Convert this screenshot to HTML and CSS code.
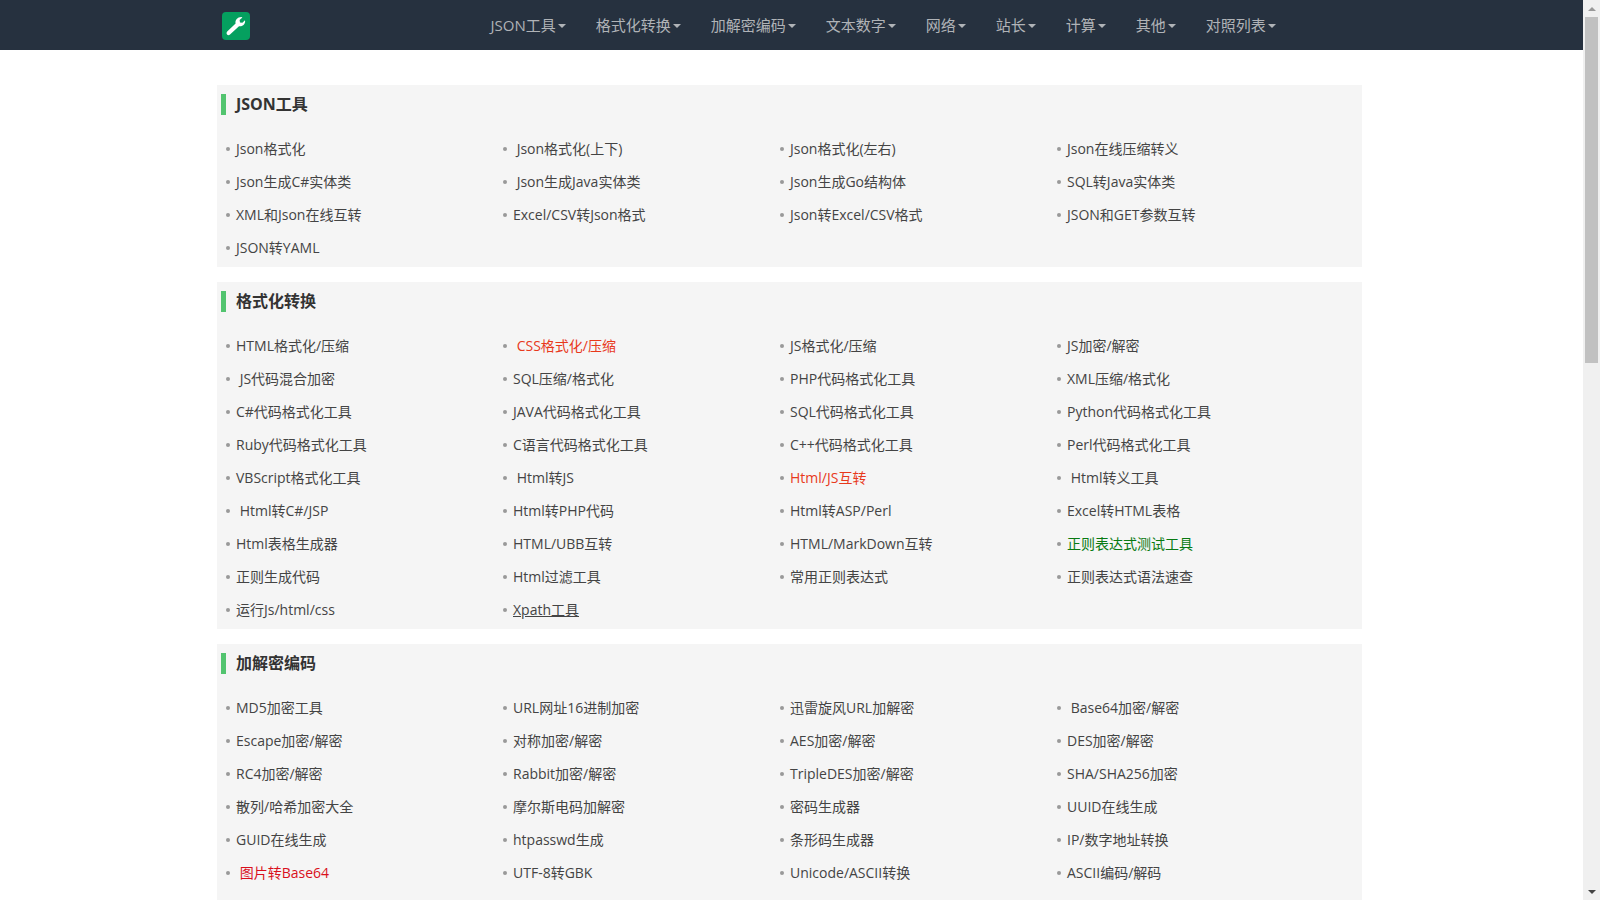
FILE: index.html
```html
<!DOCTYPE html>
<html lang="zh-CN">
<head>
  <meta charset="UTF-8" />
  <title>在线工具</title>
  <meta name="viewport" content="width=device-width, initial-scale=1" />
  <link rel="stylesheet" href="styles.css">
</head>
<body>
  <div class="page">
    <header class="navbar">
      <div class="container">
        <a class="brand" href="#" aria-label="首页">
          <svg width="28" height="28" viewBox="0 0 28 28" aria-hidden="true">
            <rect width="28" height="28" rx="4" fill="#05a05f"/>
            <path d="M5.200 19.600L13.600 11.600C12.900 8 15.400 5 19.400 5L20.400 5.400L17.600 8L18 10.400L20.400 10.800L23 8.200C23.800 11.800 20.800 14.800 17 14.200L8 22.600Q6.500 23.800 5 22.600Q3.800 21 5.200 19.600Z" fill="#fff"/>
          </svg>
        </a>
        <nav>
          <ul class="menu">
            <li><a href="#">JSON工具<span class="caret"></span></a></li>
            <li><a href="#">格式化转换<span class="caret"></span></a></li>
            <li><a href="#">加解密编码<span class="caret"></span></a></li>
            <li><a href="#">文本数字<span class="caret"></span></a></li>
            <li><a href="#">网络<span class="caret"></span></a></li>
            <li><a href="#">站长<span class="caret"></span></a></li>
            <li><a href="#">计算<span class="caret"></span></a></li>
            <li><a href="#">其他<span class="caret"></span></a></li>
            <li><a href="#">对照列表<span class="caret"></span></a></li>
          </ul>
        </nav>
      </div>
    </header>

    <main class="content">
      <section class="panel">
        <h2>JSON工具</h2>
        <ul class="tools">
          <li><a href="#">Json格式化</a></li>
          <li>&nbsp;<a href="#">Json格式化(上下)</a></li>
          <li><a href="#">Json格式化(左右)</a></li>
          <li><a href="#">Json在线压缩转义</a></li>
          <li><a href="#">Json生成C#实体类</a></li>
          <li>&nbsp;<a href="#">Json生成Java实体类</a></li>
          <li><a href="#">Json生成Go结构体</a></li>
          <li><a href="#">SQL转Java实体类</a></li>
          <li><a href="#">XML和Json在线互转</a></li>
          <li><a href="#">Excel/CSV转Json格式</a></li>
          <li><a href="#">Json转Excel/CSV格式</a></li>
          <li><a href="#">JSON和GET参数互转</a></li>
          <li><a href="#">JSON转YAML</a></li>
        </ul>
      </section>

      <section class="panel">
        <h2>格式化转换</h2>
        <ul class="tools">
          <li><a href="#">HTML格式化/压缩</a></li>
          <li>&nbsp;<a class="hot" href="#">CSS格式化/压缩</a></li>
          <li><a href="#">JS格式化/压缩</a></li>
          <li><a href="#">JS加密/解密</a></li>
          <li>&nbsp;<a href="#">JS代码混合加密</a></li>
          <li><a href="#">SQL压缩/格式化</a></li>
          <li><a href="#">PHP代码格式化工具</a></li>
          <li><a href="#">XML压缩/格式化</a></li>
          <li><a href="#">C#代码格式化工具</a></li>
          <li><a href="#">JAVA代码格式化工具</a></li>
          <li><a href="#">SQL代码格式化工具</a></li>
          <li><a href="#">Python代码格式化工具</a></li>
          <li><a href="#">Ruby代码格式化工具</a></li>
          <li><a href="#">C语言代码格式化工具</a></li>
          <li><a href="#">C++代码格式化工具</a></li>
          <li><a href="#">Perl代码格式化工具</a></li>
          <li><a href="#">VBScript格式化工具</a></li>
          <li>&nbsp;<a href="#">Html转JS</a></li>
          <li><a class="hot" href="#">Html/JS互转</a></li>
          <li>&nbsp;<a href="#">Html转义工具</a></li>
          <li>&nbsp;<a href="#">Html转C#/JSP</a></li>
          <li><a href="#">Html转PHP代码</a></li>
          <li><a href="#">Html转ASP/Perl</a></li>
          <li><a href="#">Excel转HTML表格</a></li>
          <li><a href="#">Html表格生成器</a></li>
          <li><a href="#">HTML/UBB互转</a></li>
          <li><a href="#">HTML/MarkDown互转</a></li>
          <li><a class="green" href="#">正则表达式测试工具</a></li>
          <li><a href="#">正则生成代码</a></li>
          <li><a href="#">Html过滤工具</a></li>
          <li><a href="#">常用正则表达式</a></li>
          <li><a href="#">正则表达式语法速查</a></li>
          <li><a href="#">运行Js/html/css</a></li>
          <li><a class="active" href="#">Xpath工具</a></li>
        </ul>
      </section>

      <section class="panel">
        <h2>加解密编码</h2>
        <ul class="tools">
          <li><a href="#">MD5加密工具</a></li>
          <li><a href="#">URL网址16进制加密</a></li>
          <li><a href="#">迅雷旋风URL加解密</a></li>
          <li>&nbsp;<a href="#">Base64加密/解密</a></li>
          <li><a href="#">Escape加密/解密</a></li>
          <li><a href="#">对称加密/解密</a></li>
          <li><a href="#">AES加密/解密</a></li>
          <li><a href="#">DES加密/解密</a></li>
          <li><a href="#">RC4加密/解密</a></li>
          <li><a href="#">Rabbit加密/解密</a></li>
          <li><a href="#">TripleDES加密/解密</a></li>
          <li><a href="#">SHA/SHA256加密</a></li>
          <li><a href="#">散列/哈希加密大全</a></li>
          <li><a href="#">摩尔斯电码加解密</a></li>
          <li><a href="#">密码生成器</a></li>
          <li><a href="#">UUID在线生成</a></li>
          <li><a href="#">GUID在线生成</a></li>
          <li><a href="#">htpasswd生成</a></li>
          <li><a href="#">条形码生成器</a></li>
          <li><a href="#">IP/数字地址转换</a></li>
          <li>&nbsp;<a class="red" href="#">图片转Base64</a></li>
          <li><a href="#">UTF-8转GBK</a></li>
          <li><a href="#">Unicode/ASCII转换</a></li>
          <li><a href="#">ASCII编码/解码</a></li>
        </ul>
      </section>
    </main>
  </div>

  <div class="scrollbar" aria-hidden="true">
    <span class="arrow up"></span>
    <div class="track"><div class="thumb"></div></div>
    <span class="arrow down"></span>
  </div>
</body>
</html>
```
FILE: styles.css
```css
*, *::before, *::after { box-sizing: border-box; }
body {
  display: grid;
  grid-template-columns: 1fr 17px;
  margin: 0;
  background: #fff;
  font-family: "Open Sans", "Noto Sans CJK SC", sans-serif;
  font-size: 14px;
  color: #333;
}
ul {
  list-style: none;
  margin: 0;
  padding: 0;
}
a {
  color: inherit;
  text-decoration: none;
}
a:hover, a.active {
  text-decoration: underline;
}
.page {
  display: flex;
  flex-direction: column;
  min-height: 100vh;
}

/* top bar */
.navbar {
  background: #26313f;
}
.container {
  display: flex;
  align-items: center;
  width: 100%;
  max-width: 1170px;
  min-height: 50px;
  margin: 0 auto;
  padding: 0 15px;
}
.brand {
  display: flex;
  width: 254px;
  padding-top: 2px;
}
.menu {
  display: flex;
  flex-wrap: wrap;
}
.menu a {
  display: flex;
  align-items: center;
  padding: 0 15px;
  font-size: 15px;
  line-height: 50px;
  color: #b0b3b7;
}
.menu a:hover {
  color: #fff;
  text-decoration: none;
}
.caret {
  margin-left: 2px;
  margin-top: 2px;
  border-top: 4px solid;
  border-left: 4px solid transparent;
  border-right: 4px solid transparent;
}

/* tool lists */
.content {
  display: flex;
  flex-direction: column;
  flex: 1;
  gap: 15px;
  width: 100%;
  max-width: 1169px;
  margin: 0 auto;
  padding: 35px 14px 0 10px;
}
.panel {
  padding: 9px 4px 3px;
  background: #f5f5f5;
}
.panel:last-child {
  flex: 1;
}
.panel h2 {
  margin: 0 0 17px;
  padding-left: 10px;
  border-left: 5px solid #52c46f;
  font-size: 16px;
  line-height: 21px;
  font-weight: 700;
}
.tools {
  display: grid;
  grid-template-columns: repeat(4, 1fr);
  padding: 0 24px 0 5px;
}
.tools li {
  display: flex;
  align-items: center;
  line-height: 33px;
  color: #444;
}
.tools li::before {
  content: "";
  width: 4px;
  height: 4px;
  margin-right: 6px;
  border-radius: 50%;
  background: #999;
}
.tools .hot { color: #e8391c; }
.tools .green { color: #087a12; }
.tools .red { color: #d9101c; }

/* scrollbar */
.scrollbar {
  position: sticky;
  top: 0;
  display: flex;
  flex-direction: column;
  height: 100vh;
  background: #f0f0f0;
}
.arrow {
  display: flex;
  justify-content: center;
  align-items: center;
  height: 17px;
}
.arrow::before {
  content: "";
  border-left: 4px solid transparent;
  border-right: 4px solid transparent;
}
.arrow.up::before { border-bottom: 4px solid #999; }
.arrow.down::before { border-top: 4px solid #444; }
.track {
  flex: 1;
  padding: 0 2px;
}
.thumb {
  height: 40%;
  background: #c1c1c1;
}
```
